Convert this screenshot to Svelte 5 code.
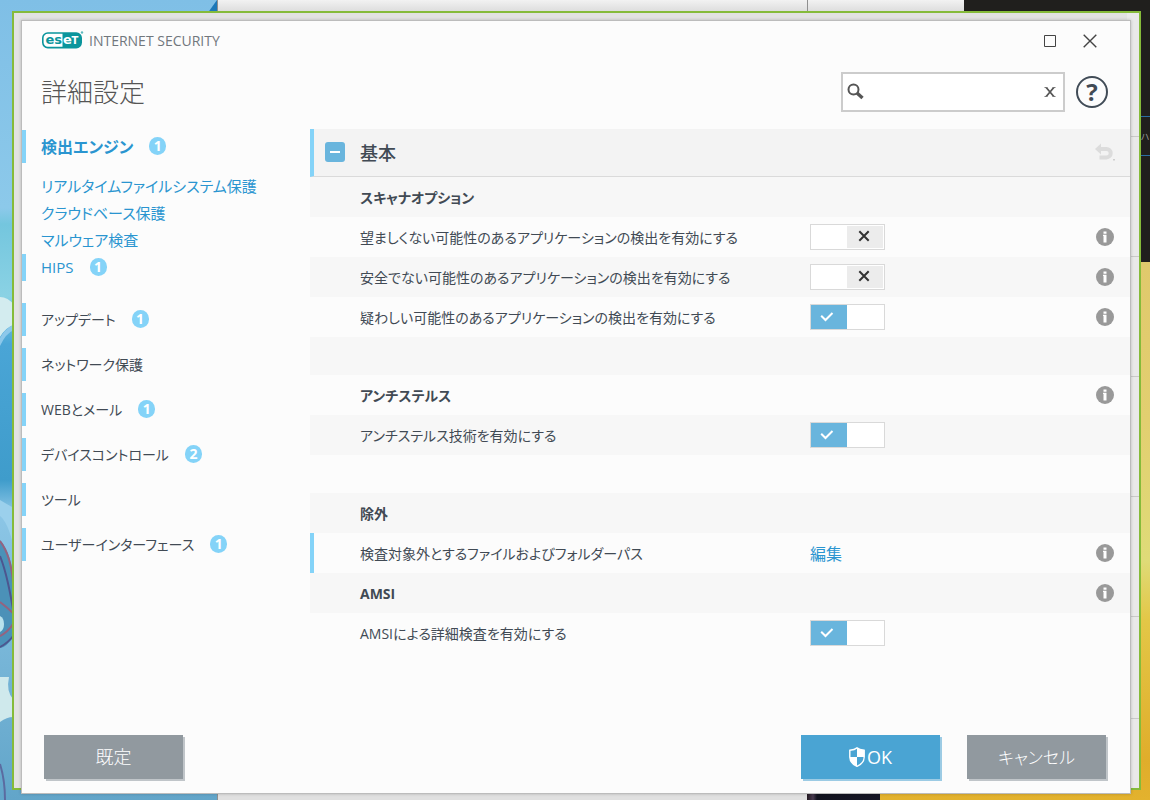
<script lang="ts">
  type Row = {
    kind: 'heading' | 'switch' | 'link' | 'gap';
    id: string;
    label?: string;
    info?: boolean;
    marked?: boolean;
    on?: boolean;
  };

  let query = $state('');
  let open = $state(true);

  const subItems = [
    { label: 'リアルタイムファイルシステム保護', count: 0 },
    { label: 'クラウドベース保護', count: 0 },
    { label: 'マルウェア検査', count: 0 },
    { label: 'HIPS', count: 1 },
  ];

  const navItems = [
    { label: 'アップデート', count: 1 },
    { label: 'ネットワーク保護', count: 0 },
    { label: 'WEBとメール', count: 1 },
    { label: 'デバイスコントロール', count: 2 },
    { label: 'ツール', count: 0 },
    { label: 'ユーザーインターフェース', count: 1 },
  ];

  let rows: Row[] = $state([
    { kind: 'heading', id: 'scanner', label: 'スキャナオプション' },
    { kind: 'switch', id: 'pua', label: '望ましくない可能性のあるアプリケーションの検出を有効にする', on: false, info: true },
    { kind: 'switch', id: 'unsafe', label: '安全でない可能性のあるアプリケーションの検出を有効にする', on: false, info: true },
    { kind: 'switch', id: 'suspicious', label: '疑わしい可能性のあるアプリケーションの検出を有効にする', on: true, info: true },
    { kind: 'gap', id: 'gap1' },
    { kind: 'heading', id: 'stealth', label: 'アンチステルス', info: true },
    { kind: 'switch', id: 'antistealth', label: 'アンチステルス技術を有効にする', on: true },
    { kind: 'gap', id: 'gap2' },
    { kind: 'heading', id: 'exclusions', label: '除外' },
    { kind: 'link', id: 'paths', label: '検査対象外とするファイルおよびフォルダーパス', info: true, marked: true },
    { kind: 'heading', id: 'amsi', label: 'AMSI', info: true },
    { kind: 'switch', id: 'amsiscan', label: 'AMSIによる詳細検査を有効にする', on: true },
  ]);
</script>

{#snippet badge(count: number)}
  {#if count}<span class="badge">{count}</span>{/if}
{/snippet}

<div class="desktop">
  <div class="wallpaper" aria-hidden="true">
    <svg class="sky" viewBox="0 0 217 800" preserveAspectRatio="none">
      <defs>
        <linearGradient id="sky" x1="0" y1="0" x2="0" y2="1">
          <stop offset="0" stop-color="#7fbfe6" />
          <stop offset="0.26" stop-color="#8cc9ea" />
          <stop offset="0.28" stop-color="#74c6de" />
          <stop offset="0.37" stop-color="#8ad2e4" />
          <stop offset="0.43" stop-color="#4aa5d6" />
          <stop offset="0.6" stop-color="#3f9ccb" />
          <stop offset="0.64" stop-color="#8cc6e6" />
          <stop offset="1" stop-color="#62a5c9" />
        </linearGradient>
      </defs>
      <rect width="217" height="800" fill="url(#sky)" />
      <path d="M0 297q8 0 14 8v20q-8 2-14 12z" fill="#d3ecef" />
      <path d="M0 346q6-13 14-16v-6q-10 6-14 14z" fill="#8cc8ea" />
      <path d="M0 500q10 6 14 8v40q-6-26-14-32z" fill="#9bd0ec" />
      <path d="M0 540q12 14 14 44v52q-8 12-14 12z" fill="#4b91b8" />
      <path d="M0 541q11 14 13 42M0 602q8 6 14 12M0 636q8-4 13-12" fill="none" stroke="#95637f" stroke-width="2" />
      <path d="M0 647q8-4 14-12M0 556q8 20 14 60" fill="none" stroke="#4d568f" stroke-width="2" />
      <path d="M0 616q4 2 4 8t-4 8z" fill="#b9e2ec" />
      <path d="M0 677h9q-3 14 4 22v18q-6 0-13 5z" fill="#cfe9ec" />
      <path d="M0 764q5 16 5 36" fill="none" stroke="#5b6ba0" stroke-width="2" />
      <path d="M217 0v14h-10z" fill="#1c78b8" />
    </svg>
    <div class="pane pane-a"></div>
    <div class="pane pane-b"></div>
    <div class="night"></div>
    <div class="editor"><span>ハ</span></div>
  </div>
  <div class="parent-window" aria-hidden="true"></div>

  <main class="dialog">
    <header class="titlebar">
      <div class="brand">
        <svg class="logo" width="42" height="18" viewBox="0 0 42 18" role="img" aria-label="ESET">
          <rect x="0.8" y="2" width="38.400" height="14.600" rx="5" fill="#fff" stroke="#0a959c" stroke-width="1.600" />
          <path d="M20.500 2H34.500a4.700 4.700 0 0 1 4.700 4.700v5a4.700 4.700 0 0 1-4.700 4.700H20.500z" fill="#0a959c" />
          <text x="3.500" y="13">es</text>
          <text class="light" x="21" y="13">e</text>
          <text class="light cap" x="29.500" y="13">T</text>
          <circle cx="40" cy="1.500" r="1.200" fill="#5fb9be" />
        </svg>
        <span class="product">INTERNET SECURITY</span>
      </div>
      <div class="window-buttons">
        <button type="button" aria-label="最大化">
          <svg width="14" height="14" viewBox="0 0 14 14"><path d="M1.500 1.500h11v11h-11z" fill="none" stroke="#444" /></svg>
        </button>
        <button type="button" aria-label="閉じる">
          <svg width="14" height="14" viewBox="0 0 14 14"><path d="M.7.700l12.600 12.600M13.300.700.700 13.300" stroke="#444" stroke-width="1.400" /></svg>
        </button>
      </div>
    </header>

    <div class="head">
      <h1>詳細設定</h1>
      <div class="search">
        <svg width="18" height="18" viewBox="0 0 18 18">
          <circle cx="6.500" cy="6.500" r="5" fill="none" stroke="#555" stroke-width="2" />
          <path d="M10 10l5.500 5" stroke="#555" stroke-width="3.400" />
        </svg>
        <input type="text" aria-label="検索" bind:value={query} />
        <button type="button" aria-label="クリア" onclick={() => (query = '')}>
          <svg width="12" height="12" viewBox="0 0 12 12">
            <path d="M2.200 1.500l7.600 9M9.800 1.500l-7.600 9" stroke="#555" stroke-width="1.800" />
            <path d="M.5 1.500h3M8.500 1.500h3M.5 10.500h3M8.500 10.500h3" stroke="#777" stroke-width="1" />
          </svg>
        </button>
      </div>
      <button class="help" type="button" aria-label="ヘルプ">?</button>
    </div>

    <div class="body">
      <nav>
        <a class="item current" href="#engine">検出エンジン{@render badge(1)}</a>
        <ul class="sub">
          {#each subItems as item}
            <li><a href="#sub" class:marked={item.count > 0}>{item.label}{@render badge(item.count)}</a></li>
          {/each}
        </ul>
        <ul class="top">
          {#each navItems as item}
            <li><a class="item" href="#section">{item.label}{@render badge(item.count)}</a></li>
          {/each}
        </ul>
      </nav>

      <section class="settings">
        <div class="section-head">
          <button class="collapse" type="button" aria-label="折りたたむ" onclick={() => (open = !open)}></button>
          <h2>基本</h2>
          <button class="undo" type="button" aria-label="元に戻す">
            <svg width="20" height="18" viewBox="0 0 20 18">
              <path d="M5 6h6.500a4.200 4.200 0 0 1 0 8.400H4.500" fill="none" stroke="#dcdcdc" stroke-width="4" />
              <path d="M0 6 6 .500v11z" fill="#dcdcdc" />
              <path d="M18.500 16h1v1.500h-1z" fill="#aaa" />
            </svg>
          </button>
        </div>
        {#if open}
          {#each rows as row (row.id)}
            <div class="row {row.kind}" class:marked={row.marked}>
              {#if row.kind === 'heading'}
                <h3>{row.label}</h3>
              {:else if row.kind === 'switch'}
                <label for={row.id}>{row.label}</label>
                <span class="toggle">
                  <input type="checkbox" id={row.id} bind:checked={row.on} />
                  {#if row.on}
                    <svg class="tick" width="14" height="10" viewBox="0 0 14 10"><path d="M1.200 3.800 5.500 8 12.500 1" fill="none" stroke="#fff" stroke-width="2" /></svg>
                  {:else}
                    <svg class="cross" width="12" height="12" viewBox="0 0 12 12"><path d="M1.300 1.300l9.400 9.400M10.700 1.300l-9.400 9.400" stroke="#333" stroke-width="2" /></svg>
                  {/if}
                </span>
              {:else if row.kind === 'link'}
                <span class="label">{row.label}</span>
                <a href="#edit">編集</a>
              {/if}
              {#if row.info}
                <button class="info" type="button" aria-label="情報">
                  <svg width="18" height="18" viewBox="0 0 18 18">
                    <circle cx="9" cy="9" r="9" fill="#999" />
                    <path d="M7.500 3.500h3v2.200h-3zM7 6.700h3.500v7.800H7.500V8H7z" fill="#fff" />
                  </svg>
                </button>
              {/if}
            </div>
          {/each}
        {/if}
      </section>
    </div>

    <footer>
      <button class="action default" type="button">既定</button>
      <button class="action ok" type="button">
        <svg width="16" height="20" viewBox="0 0 16 20">
          <path d="M8 .900C6 2.500 3.500 3 .8 3.300V10c0 4.500 3 7.500 7.200 9.300 4.200-1.800 7.200-4.800 7.200-9.300V3.300C12.500 3 10 2.500 8 .900z" fill="none" stroke="#fff" stroke-width="1.400" />
          <path d="M8 .900c2 1.600 4.500 2.100 7.200 2.400V10H8z" fill="#fff" />
          <path d="M8 10H.8c0 4.500 3 7.500 7.200 9.300z" fill="#fff" />
        </svg>OK
      </button>
      <button class="action cancel" type="button">キャンセル</button>
    </footer>
  </main>
</div>

<style>
  :global(body) {
    margin: 0;
  }
  .desktop {
    position: relative;
    display: flex;
    box-sizing: border-box;
    min-height: 100vh;
    padding: 20px 19px 6px 21px;
    overflow: hidden;
    font-family: 'Open Sans', 'Noto Sans CJK JP', sans-serif;
    font-feature-settings: 'palt';
    font-size: 14px;
    color: #414a54;
  }
  .desktop * {
    box-sizing: border-box;
  }
  .wallpaper {
    position: absolute;
    inset: 0;
    background: linear-gradient(#e0c96c 262px, #e2cf70 420px, #dfdb78 560px, #e3c747 620px, #e0ad2b 760px, #e3b22e);
  }
  .sky {
    position: absolute;
    left: 0;
    top: 0;
    width: 217px;
    height: 100%;
  }
  .pane {
    position: absolute;
    top: 0;
    bottom: 0;
    background: linear-gradient(#f2f2f2, #dcdcdc 12px, #e0e0e0);
    border-left: 1px solid #8f8f8f;
  }
  .pane-a {
    left: 217px;
    width: 591px;
  }
  .pane-b {
    left: 807px;
    width: 157px;
    bottom: 50%;
  }
  .night {
    position: absolute;
    left: 807px;
    bottom: 0;
    width: 73px;
    height: 40px;
    background: linear-gradient(90deg, #221820, #483a50 6px, #12131f 10px, #171726);
  }
  .editor {
    position: absolute;
    left: 964px;
    right: 0;
    top: 0;
    height: 262px;
    background: #201f1d;
  }
  .editor span {
    position: absolute;
    right: 0;
    top: 116px;
    width: 9px;
    height: 40px;
    border: solid #2b6da3;
    border-width: 1px 0;
    color: #999;
    font-size: 9px;
    line-height: 40px;
  }
  .parent-window {
    position: absolute;
    inset: 11px 9px 10px 12px;
    border: 2px solid #85bb3a;
    background:
      linear-gradient(#c9c9c9, #c9c9c9) 0 705px / 100% 1px no-repeat,
      repeating-linear-gradient(#e9e9e9 0 119px, #c9c9c9 119px 120px) 0 4px / 100% 620px no-repeat,
      #e9e9e9;
  }
  .parent-window::before {
    content: '';
    position: absolute;
    inset: 0 12px 0 0;
    background: #e2e2e2;
  }
  .dialog {
    position: relative;
    display: flex;
    flex: 1;
    flex-direction: column;
    border: 1px solid #bcbcbc;
    background: #fcfcfc;
    box-shadow: 0 0 3px rgba(0, 0, 0, 0.2);
  }
  button {
    display: flex;
    align-items: center;
    justify-content: center;
    padding: 0;
    border: 0;
    background: none;
    color: inherit;
    font: inherit;
    font-feature-settings: inherit;
    cursor: pointer;
  }
  h1,
  h2,
  h3 {
    margin: 0;
  }
  .titlebar {
    display: flex;
    align-items: center;
    justify-content: space-between;
    height: 40px;
    padding: 0 26px 0 20px;
  }
  .brand {
    display: flex;
    align-items: center;
    gap: 5px;
    padding-bottom: 2px;
  }
  .logo text {
    fill: #0a959c;
    font: 700 13px 'DejaVu Sans', sans-serif;
  }
  .logo .light {
    fill: #fff;
  }
  .logo .cap {
    font-size: 10px;
  }
  .product {
    color: #71777c;
  }
  .window-buttons {
    display: flex;
    gap: 12px;
  }
  .window-buttons button {
    width: 28px;
    height: 28px;
  }
  .head {
    display: flex;
    align-items: center;
    padding: 11px 22px 17px 19px;
  }
  h1 {
    flex: 1;
    color: #555;
    font-size: 26px;
    font-weight: 300;
    line-height: 40px;
  }
  .search {
    display: flex;
    align-items: center;
    width: 224px;
    height: 40px;
    padding: 0 6px 0 4px;
    border: 2px solid #cccccc;
    background: #fff;
  }
  .search input {
    flex: 1;
    min-width: 0;
    height: 100%;
    border: 0;
    outline: 0;
    background: none;
    font: inherit;
  }
  .search button {
    width: 14px;
    height: 24px;
  }
  .help {
    width: 32px;
    height: 32px;
    margin-left: 11px;
    border: 2px solid #414c57;
    border-radius: 50%;
    font-size: 24px;
    font-weight: 700;
    line-height: 28px;
  }
  .body {
    display: flex;
    flex: 1;
  }
  nav {
    width: 288px;
    padding-top: 1px;
  }
  nav ul {
    margin: 0;
    padding: 0;
    list-style: none;
  }
  nav a {
    display: flex;
    align-items: center;
    gap: 16px;
    padding: 0 0 2px 19px;
    color: inherit;
    text-decoration: none;
  }
  .item {
    height: 33px;
    padding-left: 15px;
    border-left: 4px solid #84d3f8;
  }
  .current {
    color: #2a95d0;
    font-size: 16px;
    font-weight: 700;
  }
  .sub {
    padding: 10px 0 22px;
    color: #2a95d0;
    font-size: 15px;
  }
  .sub a {
    height: 27px;
  }
  .sub .marked {
    padding-left: 15px;
    border-left: 4px solid #84d3f8;
  }
  .top {
    display: grid;
    gap: 12px;
  }
  .badge {
    display: grid;
    place-items: center;
    width: 17px;
    height: 18px;
    border-radius: 9px;
    background: #84d3f8;
    color: #fff;
    font-size: 14px;
    font-weight: 700;
    line-height: 18px;
  }
  .settings {
    flex: 1;
  }
  .section-head {
    display: flex;
    align-items: center;
    height: 48px;
    padding: 0 15px 2px 11px;
    border-left: 4px solid #84d3f8;
    border-bottom: 1px solid #dadada;
    background: #f3f3f3;
  }
  .collapse {
    width: 20px;
    height: 20px;
    border-radius: 3px;
    background: #69b5dd;
  }
  .collapse::before {
    content: '';
    width: 10px;
    height: 2px;
    background: #fff;
  }
  h2 {
    flex: 1;
    padding-left: 15px;
    font-size: 18px;
    font-weight: 500;
  }
  .row {
    display: grid;
    grid-template-columns: 450px 1fr 18px;
    align-items: center;
    height: 40px;
    padding: 0 16px 0 50px;
  }
  .row:nth-child(even) {
    background: #f7f7f7;
  }
  .row.gap {
    height: 38px;
  }
  .row.marked {
    padding-left: 46px;
    border-left: 4px solid #84d3f8;
  }
  .row a {
    color: #2a95d0;
    font-size: 16px;
    text-decoration: none;
  }
  h3 {
    font-size: 14px;
    font-weight: 700;
  }
  .toggle {
    position: relative;
    width: 75px;
    height: 26px;
  }
  .toggle input {
    display: block;
    width: 100%;
    height: 100%;
    margin: 0;
    padding: 1px;
    border: 1px solid #d9d9d9;
    appearance: none;
    background: linear-gradient(90deg, #fff 35px, #ececec 35px) content-box, #fff;
  }
  .toggle input:checked {
    padding: 0;
    background: linear-gradient(90deg, #69b5dd 36px, #fff 36px) content-box;
  }
  .toggle svg {
    position: absolute;
    pointer-events: none;
  }
  .tick {
    left: 10px;
    top: 8px;
  }
  .cross {
    left: 48px;
    top: 6px;
  }
  .info {
    grid-column: 3;
    width: 18px;
    height: 18px;
  }
  footer {
    display: flex;
    gap: 27px;
    padding: 0 24px 14px 22px;
  }
  .action {
    width: 139px;
    height: 44px;
    padding-bottom: 2px;
    background: #91999f;
    box-shadow: 2px 2px 0 #c0c5c9;
    color: #fff;
    font-size: 18px;
    font-weight: 300;
  }
  .default {
    margin-right: auto;
  }
  .ok {
    padding-bottom: 0;
    background: #4aa4d3;
    box-shadow: 2px 2px 0 #9ccbe4;
    gap: 2px;
    font-weight: 400;
  }
  .cancel {
    font-size: 17px;
  }
</style>
